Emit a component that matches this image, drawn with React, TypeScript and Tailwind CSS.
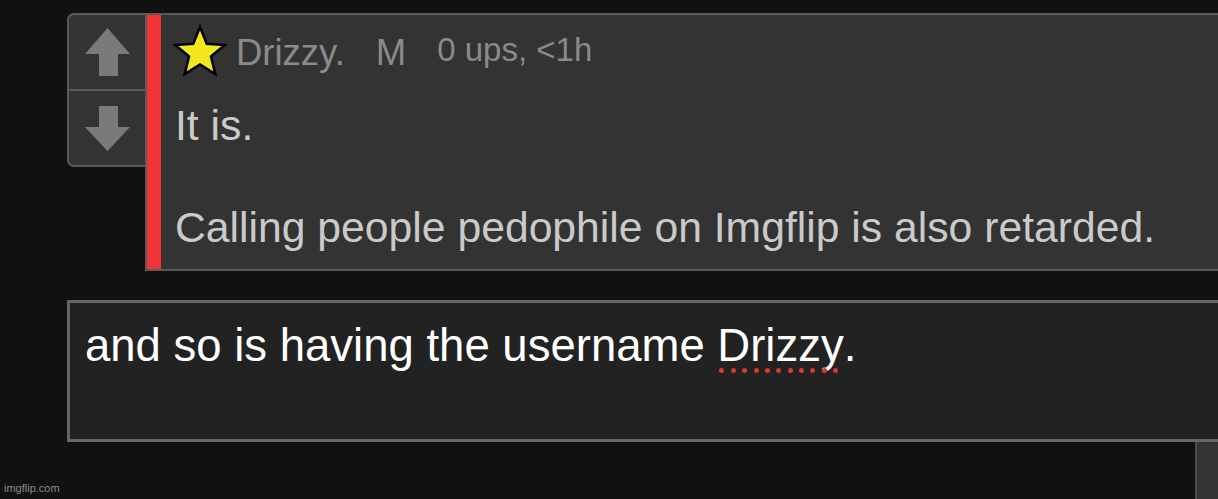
import React from 'react';

const starPoints = (() => {
    const cx = 26;
    const cy = 28;
    const R = 26;
    const r = 11.5;
    const pts: string[] = [];
    for (let i = 0; i < 10; i++) {
        const rad = i % 2 === 0 ? R : r;
        const a = -Math.PI / 2 + (i * Math.PI) / 5;
        pts.push(`${(cx + rad * Math.cos(a)).toFixed(2)},${(cy + rad * Math.sin(a)).toFixed(2)}`);
    }
    return pts.join(' ');
})();

function Star() {
    return (
        <svg width="54" height="54" viewBox="-1 -1 54 54" className="shrink-0">
            <polygon points={starPoints} fill="#f2e81c" stroke="#000" strokeWidth="2.5" strokeLinejoin="miter" />
        </svg>
    );
}

function UpArrow() {
    return (
        <svg width="45" height="48" viewBox="0 0 45 48">
            <polygon points="22.5,0 45,26 33,26 33,48 14,48 14,26 0,26" fill="#7a7a7a" />
        </svg>
    );
}

function DownArrow() {
    return (
        <svg width="45" height="45" viewBox="0 0 45 45">
            <polygon points="14,0 33,0 33,21 45,21 22.5,45 0,21 14,21" fill="#7a7a7a" />
        </svg>
    );
}

function App() {
    const dots = Array.from({ length: 11 });

    return (
        <div className="relative h-[499px] w-[1218px] overflow-hidden bg-[#111] font-['Liberation_Sans',Arial,sans-serif]">
            <div className="pl-[67px] pt-[13px]">
                <div className="flex w-[1200px] items-start">
                    {/* vote buttons */}
                    <div className="flex h-[154px] w-[78px] shrink-0 flex-col rounded-l-[7px] border-2 border-r-0 border-[#5a5a5a] bg-[#333]">
                        <div className="flex h-[76px] items-center justify-center border-b-2 border-[#5a5a5a]">
                            <UpArrow />
                        </div>
                        <div className="flex flex-1 items-center justify-center">
                            <DownArrow />
                        </div>
                    </div>

                    {/* comment */}
                    <div className="flex h-[258px] flex-1 border-2 border-r-0 border-[#5a5a5a] bg-[#333]">
                        <div className="w-[14px] shrink-0 bg-[#f43434]" />
                        <div className="pl-[12px] pt-[9px]">
                            <div className="flex items-start">
                                <Star />
                                <span className="ml-[9px] mt-[9px] text-[36.5px] leading-[40px] text-[#8a8a8a]">Drizzy.</span>
                                <span className="ml-[31px] mt-[9px] text-[36.5px] leading-[40px] text-[#8a8a8a]">M</span>
                                <span className="ml-[31px] mt-[6px] text-[33px] leading-[40px] text-[#8a8a8a]">0 ups, &lt;1h</span>
                            </div>
                            <div className="mt-[22px] pl-[2px] text-[42.7px] leading-[50.8px] text-[#cacaca]">
                                <p>It is.</p>
                                <p className="mt-[50.8px]">Calling people pedophile on Imgflip is also retarded.</p>
                            </div>
                        </div>
                    </div>
                </div>

                {/* reply box */}
                <div className="mt-[29px] h-[142px] w-[1200px] border-[3px] border-r-0 border-[#666] bg-[#222] pl-[15px] pt-[17px]">
                    <p className="text-[45.5px] leading-[52px] text-white">
                        and so is having the username{' '}
                        <span className="relative">
                            Drizzy
                            <span className="absolute left-[2px] top-[48px] flex gap-[6.4px]">
                                {dots.map((_, i) => (
                                    <span key={i} className="h-[5px] w-[5px] rounded-full bg-[#d93a2e]" />
                                ))}
                            </span>
                        </span>
                        .
                    </p>
                </div>
            </div>

            <div className="ml-[1195px] h-[60px] w-[40px] border-l-2 border-[#4a4a4a] bg-[#333]" />

            <span className="absolute bottom-[3px] left-[4px] text-[11px] text-[#8a8a8a]">imgflip.com</span>
        </div>
    );
}

export default App;
